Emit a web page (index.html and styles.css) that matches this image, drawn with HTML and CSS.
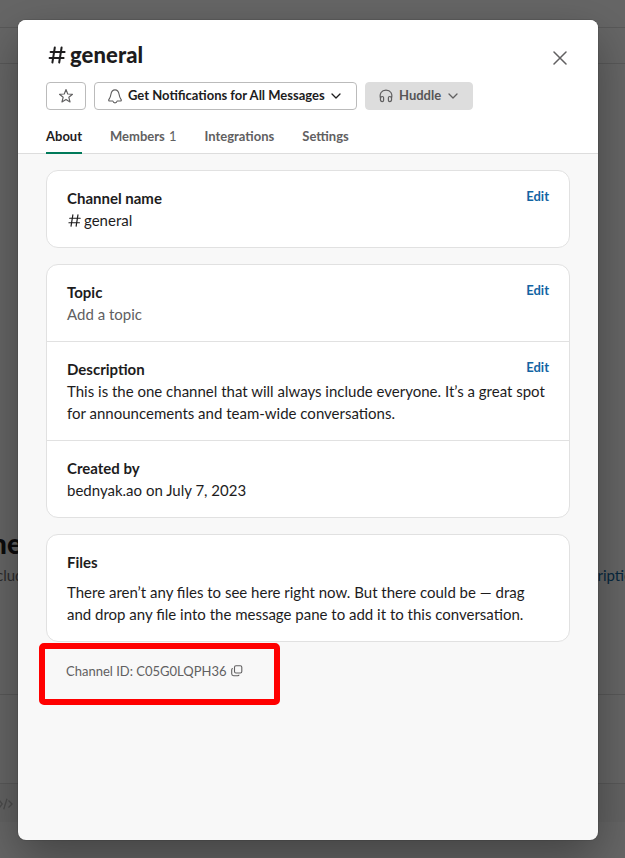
FILE: index.html
```html
<!DOCTYPE html>
<html lang="en">
<head>
<meta charset="utf-8">
<title>Channel details</title>
<link rel="stylesheet" href="styles.css">
</head>
<body>
<svg class="sprite" aria-hidden="true">
  <symbol id="hash" viewBox="0 0 20 20"><path d="M7.800 2.500 5.400 17.500M14.600 2.500l-2.400 15M3.600 7h14M2.600 13h14" fill="none" stroke="currentColor" stroke-linecap="round"/></symbol>
  <symbol id="chevron" viewBox="0 0 10 6"><path d="m1 1 4 4 4-4" fill="none" stroke="currentColor" stroke-width="1.3" stroke-linecap="round" stroke-linejoin="round"/></symbol>
</svg>
<div class="workspace" aria-hidden="true">
  <div class="strip"></div>
  <div class="bookmarks"></div>
  <div class="messages">
    <div class="intro-title"><span>ne</span></div>
    <div class="intro-text"><span>clud</span><span class="intro-link">ription</span></div>
  </div>
  <div class="composer"></div>
  <div class="toolbar">
    <svg width="17" height="12" viewBox="0 0 17 12"><path d="M-.5 2.500 2.200 6-.5 9.500M7 .7 3.700 11.300M8.500 2.500 12 6 8.500 9.500" fill="none" stroke="currentColor" stroke-width="1.300"/></svg>
  </div>
</div>
<main class="modal">
  <header class="header">
    <div class="title-row">
      <h1><svg class="hash-big"><use href="#hash"/></svg>general</h1>
      <button class="close" aria-label="Close"><svg width="14" height="14" viewBox="0 0 14 14"><path d="m1 1 12 12M13 1 1 13" fill="none" stroke="currentColor" stroke-width="1.5" stroke-linecap="round"/></svg></button>
    </div>
    <div class="actions">
      <button class="btn star" aria-label="Star channel"><svg width="16" height="16" viewBox="0 0 16 16"><path d="m8 1.500 1.750 4.450 4.750.3-3.650 3.050 1.200 4.700L8 11.400 3.950 14l1.200-4.700L1.500 6.250l4.750-.3z" fill="none" stroke="currentColor" stroke-width="1.150" stroke-linejoin="round"/></svg></button>
      <button class="btn notify"><svg class="bell" width="14" height="15" viewBox="0 0 14 15"><path d="M7 .8C4.600.8 3.400 2.500 3 5c-.4 2.600-.7 3.500-2 5.300-.6.9-.3 1.700.7 1.700h3.200c.2 1.100 1 1.900 2.100 1.900s1.900-.8 2.100-1.900h3.200c1 0 1.300-.8.7-1.700-1.300-1.800-1.600-2.700-2-5.300C10.600 2.500 9.400.8 7 .8z" fill="none" stroke="currentColor" stroke-width="1.150" stroke-linejoin="round"/></svg><span>Get Notifications for All Messages</span><svg class="chevron"><use href="#chevron"/></svg></button>
      <button class="btn huddle"><svg width="14" height="14" viewBox="0 0 14 14"><path d="M1.500 9.500C.2 4.500 2.500 1.200 7 1.200s6.800 3.300 5.500 8.300M1.400 10.300c0-1.800.6-2.800 1.900-2.800 1 0 1.300.5 1.300 1.300v2.500c0 .8-.3 1.300-1.300 1.300-1.300 0-1.900-.8-1.900-2.300zM12.600 10.300c0-1.800-.6-2.800-1.900-2.800-1 0-1.300.5-1.300 1.300v2.500c0 .8.3 1.300 1.300 1.300 1.300 0 1.900-.8 1.900-2.300z" fill="none" stroke="currentColor" stroke-width="1.200" stroke-linejoin="round"/></svg><span>Huddle</span><svg class="chevron"><use href="#chevron"/></svg></button>
    </div>
    <nav class="tabs">
      <a class="tab active">About</a>
      <a class="tab">Members <span class="count">1</span></a>
      <a class="tab">Integrations</a>
      <a class="tab">Settings</a>
    </nav>
  </header>
  <div class="content">
    <section class="card">
      <div class="row">
        <div><h2>Channel name</h2><p class="name"><svg class="hash-small"><use href="#hash"/></svg>general</p></div>
        <a class="edit">Edit</a>
      </div>
    </section>
    <section class="card">
      <div class="row">
        <div><h2>Topic</h2><p class="muted">Add a topic</p></div>
        <a class="edit">Edit</a>
      </div>
      <div class="row stacked">
        <div class="row-head"><h2>Description</h2><a class="edit">Edit</a></div>
        <p>This is the one channel that will always include everyone. It’s a great spot for announcements and team-wide conversations.</p>
      </div>
      <div class="row">
        <div><h2>Created by</h2><p>bednyak.ao on July 7, 2023</p></div>
      </div>
    </section>
    <section class="card">
      <div class="row stacked files">
        <h2>Files</h2>
        <p>There aren’t any files to see here right now. But there could be — drag and drop any file into the message pane to add it to this conversation.</p>
      </div>
    </section>
    <div class="channel-id"><span>Channel ID: C05G0LQPH36</span><svg width="12" height="12" viewBox="0 0 12 12"><path d="M5 .7h4.300q1.500 0 1.500 1.500v4.300q0 1.500-1.500 1.500H5Q3.500 8 3.500 6.500V2.200Q3.500.7 5 .7zM1.900 3.500Q.7 3.500.7 5v3.800q0 1.900 1.900 1.900H6.500q1.500 0 1.500-1" fill="none" stroke="currentColor" stroke-width="1.100"/></svg></div>
  </div>
</main>
</body>
</html>
```
FILE: styles.css
```css
* { box-sizing: border-box; }
body {
  margin: 0;
  height: 858px;
  overflow: hidden;
  position: relative;
  background: #666;
  color: #1d1c1d;
  font: 15px/22px Lato, sans-serif;
}
h1, h2, p { margin: 0; }
button { font: inherit; color: inherit; }
.sprite { display: none; }

/* Dimmed workspace behind the dialog */
.workspace { display: flex; flex-direction: column; height: 858px; }
.strip { height: 28px; border-bottom: 1px solid #595959; }
.bookmarks { height: 36px; border-bottom: 1px solid #595959; }
.messages { height: 631px; padding-top: 462px; border-bottom: 1px solid #595959; }
.intro-title { height: 36px; color: #0c0b0c; font-size: 28px; font-weight: 900; line-height: 34px; }
.intro-title span { margin-left: -9px; }
.intro-text { display: flex; justify-content: space-between; margin: 2px -16px 0 -4px; color: #2c2b2c; }
.intro-link { color: #07283f; }
.composer { height: 89px; border-bottom: 1px solid #595959; }
.toolbar { height: 38px; padding-top: 14px; background: #636363; color: #4c4c4c; }
.toolbar svg { display: block; }

.modal {
  position: absolute;
  left: 18px;
  top: 20px;
  width: 580px;
  height: 820px;
  overflow: hidden;
  border-radius: 8px;
  background: #f8f8f8;
  box-shadow: 0 0 0 1px rgba(29, 28, 29, .13), 0 18px 48px rgba(0, 0, 0, .35);
}
.header {
  height: 134px;
  padding: 20px 28px 0;
  border-bottom: 1px solid #ddd;
  background: #fff;
}
.title-row { display: flex; justify-content: space-between; height: 42px; }
h1 { display: flex; font-size: 22px; font-weight: 900; line-height: 30px; letter-spacing: .1px; }
.hash-big { width: 20px; height: 20px; margin: 5px 3px 0 1px; stroke-width: 2; }
.close { display: flex; width: 14px; height: 14px; margin: 11px 3px 0 0; padding: 0; border: 0; background: none; color: #616061; }
.actions { display: flex; gap: 8px; }
.btn {
  display: flex;
  align-items: center;
  height: 28px;
  padding: 0;
  border: 1px solid #bbb;
  border-radius: 4px;
  background: #fff;
  font-size: 13px;
  font-weight: 700;
  line-height: 24px;
}
.btn > svg { color: #616061; }
.btn > span { padding-bottom: 2px; }
.star { width: 40px; justify-content: center; }
.notify { width: 263px; padding-left: 13px; }
.notify > span { margin-left: 6px; }
.chevron { width: 10px; height: 6px; margin-left: 6px; }
.btn.notify .chevron { color: #1d1c1d; }
.huddle { width: 108px; padding-left: 13px; border-color: #ddd; background: #ddd; color: #565556; }
.huddle > span { margin-left: 6px; }
.huddle .chevron { margin-left: 7px; }
.tabs { display: flex; gap: 28px; height: 44px; padding-top: 8px; }
.tab { height: 36px; color: #616061; font-size: 13px; font-weight: 700; line-height: 36px; }
.tab.active { border-bottom: 2px solid #007a5a; color: #1d1c1d; }
.count { margin-left: 1px; font-weight: 400; }

.content { padding: 16px 28px; }
.card { margin-bottom: 16px; border: 1px solid #e1e1e1; border-radius: 12px; background: #fff; }
.row { display: flex; justify-content: space-between; padding: 16px 20px; }
.row + .row { border-top: 1px solid #e1e1e1; }
.row.stacked { display: block; }
.row-head { display: flex; justify-content: space-between; }
h2 { font-size: 15px; font-weight: 700; line-height: 22px; }
.muted { color: #616061; }
.name { display: flex; }
.hash-small { width: 15px; height: 15px; margin: 4px 2px 0 0; stroke-width: 1.6; }
.edit { height: 18px; color: #1264a3; font-size: 13px; font-weight: 700; line-height: 18px; }
.files h2 { margin-bottom: 8px; }
.channel-id {
  display: flex;
  align-items: flex-start;
  gap: 4px;
  width: 241px;
  height: 62px;
  margin: -15px 0 0 -7px;
  padding: 13px 21px;
  border: 6px solid red;
  border-radius: 5px;
  color: #616061;
  font-size: 13px;
  line-height: 18px;
}
.channel-id svg { margin-top: 3px; }
```
